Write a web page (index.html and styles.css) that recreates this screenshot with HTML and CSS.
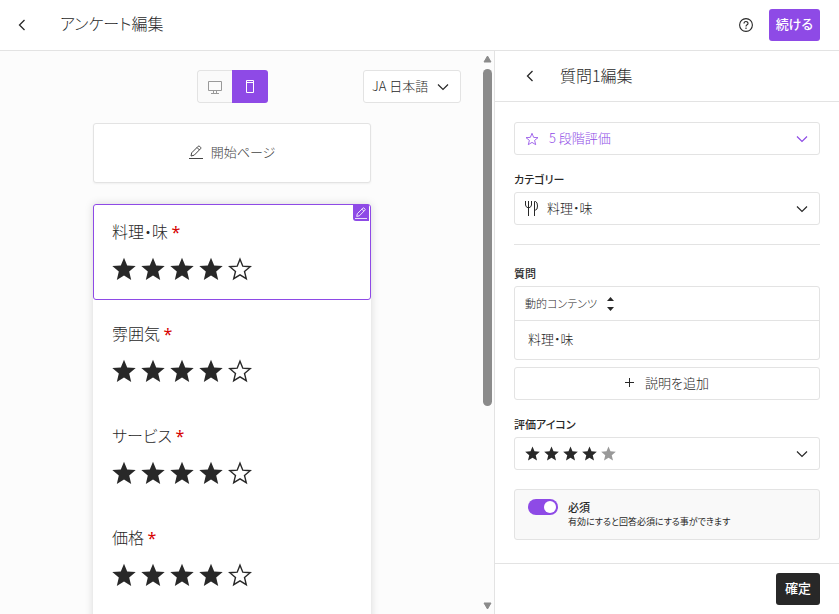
FILE: index.html
```html
<!DOCTYPE html>
<html lang="ja">
<head>
  <meta charset="UTF-8" />
  <meta name="viewport" content="width=device-width, initial-scale=1.0" />
  <title>アンケート編集</title>
  <link rel="stylesheet" href="styles.css">
</head>
<body>

<svg class="sprite" width="0" height="0" aria-hidden="true">
  <symbol id="star" viewBox="0 0 24 24"><path d="M12 .8l3.200 7.700 8.500.6-6.500 5.500 2 8.400-7.200-4.400L4.800 23l2-8.400L.3 9.100l8.500-.6z" fill="currentColor"/></symbol>
  <symbol id="star-line" viewBox="0 0 24 24"><path d="M12 2.200l2.800 7 7.400.5-5.700 4.700 1.800 7.300-6.300-3.900-6.300 3.900 1.800-7.300L1.800 9.700l7.400-.5z" fill="none" stroke="currentColor" stroke-width="1.400"/></symbol>
  <symbol id="chevron-down" viewBox="0 0 12 12"><path d="M1 3.500l5 5 5-5" fill="none" stroke="currentColor" stroke-width="1.200"/></symbol>
  <symbol id="chevron-left" viewBox="0 0 12 12"><path d="M8.500 1l-5 5 5 5" fill="none" stroke="currentColor" stroke-width="1.300"/></symbol>
  <symbol id="pencil" viewBox="0 0 14 14"><path d="M2 11l.7-3.200L9.200 1.300q.7-.6 1.400 0l1 1q.7.7 0 1.400L5.200 10.200zM8 2.500l2.500 2.500M0 13.500h14" fill="none" stroke="currentColor"/></symbol>
</svg>

<header class="topbar">
  <button class="back" aria-label="戻る"><svg class="icon-sm"><use href="#chevron-left"/></svg></button>
  <h1>アンケート編集</h1>
  <button class="help" aria-label="ヘルプ">
    <svg width="14" height="14" viewBox="0 0 14 14" fill="none" stroke="currentColor" stroke-width="1.100"><circle cx="7" cy="7" r="6.400"/><path d="M5 5.500C5 2.900 9 2.900 9 5.400 9 6.900 7 6.700 7 8.500M7 9.600v1.300"/></svg>
  </button>
  <button class="btn btn-primary">続ける</button>
</header>

<div class="layout">
  <main class="preview">
    <div class="canvas">
      <div class="toolbar">
        <div class="device">
          <button aria-label="デスクトップ">
            <svg width="14" height="14" viewBox="0 0 14 14" fill="none" stroke="currentColor"><path d="M.5 1.500h13v9H.5zM5.500 10.500v3M8.500 10.500v3M3 13.500h8"/></svg>
          </button>
          <button class="active" aria-label="モバイル" aria-pressed="true">
            <svg width="8" height="14" viewBox="0 0 8 14" fill="none" stroke="currentColor"><path d="M.5.5h7v12h-7zM.5 2.500h7"/></svg>
          </button>
        </div>
        <div class="select lang">
          <select aria-label="言語"><option>JA 日本語</option></select>
          <svg class="icon-sm"><use href="#chevron-down"/></svg>
        </div>
      </div>

      <button class="start-page"><svg class="icon"><use href="#pencil"/></svg>開始ページ</button>

      <div class="phone">
        <section class="question selected">
          <h2>料理・味 <span class="req">*</span></h2>
          <div class="stars">
            <label><input type="radio" name="q1" aria-label="1"><svg><use href="#star"/></svg></label>
            <label><input type="radio" name="q1" aria-label="2"><svg><use href="#star"/></svg></label>
            <label><input type="radio" name="q1" aria-label="3"><svg><use href="#star"/></svg></label>
            <label><input type="radio" name="q1" aria-label="4" checked><svg><use href="#star"/></svg></label>
            <label><input type="radio" name="q1" aria-label="5"><svg><use href="#star-line"/></svg></label>
          </div>
          <button class="edit-badge" aria-label="編集"><svg><use href="#pencil"/></svg></button>
        </section>
        <section class="question">
          <h2>雰囲気 <span class="req">*</span></h2>
          <div class="stars">
            <label><input type="radio" name="q2" aria-label="1"><svg><use href="#star"/></svg></label>
            <label><input type="radio" name="q2" aria-label="2"><svg><use href="#star"/></svg></label>
            <label><input type="radio" name="q2" aria-label="3"><svg><use href="#star"/></svg></label>
            <label><input type="radio" name="q2" aria-label="4" checked><svg><use href="#star"/></svg></label>
            <label><input type="radio" name="q2" aria-label="5"><svg><use href="#star-line"/></svg></label>
          </div>
        </section>
        <section class="question">
          <h2>サービス <span class="req">*</span></h2>
          <div class="stars">
            <label><input type="radio" name="q3" aria-label="1"><svg><use href="#star"/></svg></label>
            <label><input type="radio" name="q3" aria-label="2"><svg><use href="#star"/></svg></label>
            <label><input type="radio" name="q3" aria-label="3"><svg><use href="#star"/></svg></label>
            <label><input type="radio" name="q3" aria-label="4" checked><svg><use href="#star"/></svg></label>
            <label><input type="radio" name="q3" aria-label="5"><svg><use href="#star-line"/></svg></label>
          </div>
        </section>
        <section class="question">
          <h2>価格 <span class="req">*</span></h2>
          <div class="stars">
            <label><input type="radio" name="q4" aria-label="1"><svg><use href="#star"/></svg></label>
            <label><input type="radio" name="q4" aria-label="2"><svg><use href="#star"/></svg></label>
            <label><input type="radio" name="q4" aria-label="3"><svg><use href="#star"/></svg></label>
            <label><input type="radio" name="q4" aria-label="4" checked><svg><use href="#star"/></svg></label>
            <label><input type="radio" name="q4" aria-label="5"><svg><use href="#star-line"/></svg></label>
          </div>
        </section>
      </div>
    </div>

    <div class="scrollbar" aria-hidden="true">
      <svg width="9" height="8" viewBox="0 0 9 8"><path d="M4.500 1L8 7H1z" fill="currentColor" stroke="currentColor" stroke-linejoin="round"/></svg>
      <div class="track"><div class="thumb"></div></div>
      <svg width="9" height="8" viewBox="0 0 9 8"><path d="M4.500 7L8 1H1z" fill="currentColor" stroke="currentColor" stroke-linejoin="round"/></svg>
    </div>
  </main>

  <aside class="sidebar">
    <div class="side-head">
      <button class="back" aria-label="戻る"><svg class="icon-sm"><use href="#chevron-left"/></svg></button>
      <h2>質問1編集</h2>
    </div>

    <div class="side-body">
      <div class="select type">
        <svg class="icon"><use href="#star-line"/></svg>
        <select aria-label="質問タイプ"><option>5 段階評価</option></select>
        <svg class="icon-sm"><use href="#chevron-down"/></svg>
      </div>

      <div class="field">
        <label for="category">カテゴリー</label>
        <div class="select">
          <svg class="icon-cat" viewBox="0 0 13 15" fill="none" stroke="currentColor"><path d="M.5 0v4q0 2 3 3 3-1 3-3V0M3.500 0v15M9.500 15V.5h1q2 .5 2 4.500t-2 4h-1"/></svg>
          <select id="category"><option>料理・味</option></select>
          <svg class="icon-sm"><use href="#chevron-down"/></svg>
        </div>
      </div>

      <hr>

      <div class="field">
        <label for="question">質問</label>
        <div class="editor">
          <div class="editor-bar">
            <select aria-label="動的コンテンツ"><option>動的コンテンツ</option></select>
            <svg width="7" height="14" viewBox="0 0 7 14" fill="currentColor"><path d="M0 4l3.500-4L7 4zM0 10l3.500 4L7 10z"/></svg>
          </div>
          <input type="text" id="question" value="料理・味">
        </div>
        <button class="add"><svg width="9" height="9" viewBox="0 0 9 9"><path d="M4.500 0v9M0 4.500h9" stroke="currentColor"/></svg>説明を追加</button>
      </div>

      <div class="field">
        <label for="rateIcon">評価アイコン</label>
        <div class="select">
          <span class="mini-stars">
            <svg><use href="#star"/></svg><svg><use href="#star"/></svg><svg><use href="#star"/></svg><svg><use href="#star"/></svg><svg class="off"><use href="#star"/></svg>
          </span>
          <select id="rateIcon"><option value="star"></option></select>
          <svg class="icon-sm"><use href="#chevron-down"/></svg>
        </div>
      </div>

      <div class="required-box">
        <input type="checkbox" id="required" class="switch" checked>
        <label for="required"><strong>必須</strong><small>有効にすると回答必須にする事ができます</small></label>
      </div>
    </div>

    <div class="side-foot">
      <button class="btn btn-dark">確定</button>
    </div>
  </aside>
</div>

</body>
</html>
```

FILE: styles.css
```css
:root {
  --purple: #8e4ae6;
  --dark: #282828;
  --line: #e3e3e3;
  --gray: #8b8b8b;
}
* { box-sizing: border-box; }
body {
  margin: 0;
  height: 100vh;
  display: flex;
  flex-direction: column;
  font-family: "Noto Sans CJK JP", sans-serif;
  font-feature-settings: "palt";
  font-size: 13px;
  font-weight: 300;
  line-height: 20px;
  color: var(--dark);
  background: #fff;
}
button, select, input {
  font: inherit;
  font-feature-settings: inherit;
  color: inherit;
  margin: 0;
  padding: 0;
  border: none;
  background: none;
}
button { cursor: pointer; }
svg { display: block; flex: none; }
.sprite { position: absolute; }
h1, h2 {
  margin: 0;
  font-size: 16px;
  font-weight: 300;
  line-height: 24px;
}
.icon { width: 14px; height: 14px; }
.icon-sm { width: 12px; height: 12px; }

.topbar {
  flex: none;
  height: 51px;
  display: flex;
  align-items: center;
  padding: 0 19px 0 16px;
  border-bottom: 1px solid var(--line);
}
.topbar h1 { flex: 1; padding-bottom: 4px; }
.back { width: 12px; margin-right: 32px; }
.help { margin-right: 16px; }
.btn {
  height: 32px;
  padding: 0 9px 2px;
  border-radius: 3px;
  color: #fff;
  font-weight: 500;
}
.btn-primary { padding: 0 7px 2px; background: var(--purple); }
.btn-dark { background: var(--dark); }

.layout {
  flex: 1;
  min-height: 0;
  display: flex;
}
.preview {
  flex: 1;
  min-width: 0;
  display: flex;
  background: #fcfcfc;
}
.canvas {
  flex: 1;
  overflow: hidden;
  padding: 19px 21px 0 3px;
  display: flex;
  flex-direction: column;
  align-items: center;
}
.toolbar {
  width: 100%;
  display: grid;
  grid-template-columns: 1fr auto 1fr;
  margin-bottom: 20px;
}
.device {
  grid-column: 2;
  display: flex;
  height: 33px;
  border-radius: 3px;
  overflow: hidden;
  background: #fafafa;
}
.device button {
  width: 35px;
  display: flex;
  align-items: center;
  justify-content: center;
  color: #999;
  border: 1px solid var(--line);
  border-right: none;
  border-radius: 3px 0 0 3px;
}
.device button.active {
  width: 36px;
  color: #fff;
  background: var(--purple);
  border: none;
  border-radius: 0;
}
.lang { width: 98px; justify-self: end; }
.lang.select { padding: 0 11px 0 8px; }

.select {
  height: 33px;
  display: flex;
  align-items: center;
  padding: 0 11px 0 10px;
  border: 1px solid var(--line);
  border-radius: 3px;
  background: #fff;
}
.select select {
  appearance: none;
  flex: 1;
  min-width: 0;
  height: 100%;
  padding-bottom: 2px;
}
.select .icon { margin-right: 10px; }

.start-page {
  flex: none;
  width: 278px;
  height: 60px;
  margin-bottom: 21px;
  padding-bottom: 2px;
  display: flex;
  align-items: center;
  justify-content: center;
  gap: 8px;
  color: #444;
  background: #fff;
  border: 1px solid var(--line);
  border-radius: 3px;
  box-shadow: 0 1px 2px rgba(0,0,0,0.05);
}
.phone {
  flex: none;
  width: 278px;
  min-height: 100%;
  display: flex;
  flex-direction: column;
  gap: 6px;
  background: #fff;
  border-radius: 3px;
  box-shadow: 0 0 8px rgba(0,0,0,0.15);
}
.question {
  position: relative;
  height: 96px;
  padding: 14px 18px;
  border: 1px solid transparent;
  border-radius: 3px;
}
.question.selected { border-color: var(--purple); }
.question h2 { margin-bottom: 13px; }
.req {
  font-family: "Noto Sans", sans-serif;
  font-weight: 400;
  color: #d60000;
}
.stars { display: flex; gap: 5px; }
.stars label { display: flex; }
.stars input { appearance: none; width: 0; height: 0; }
.stars svg { width: 24px; height: 24px; }
.edit-badge {
  position: absolute;
  top: 0;
  right: 1px;
  width: 16px;
  height: 16px;
  display: flex;
  align-items: center;
  justify-content: center;
  color: #fff;
  background: var(--purple);
  border-radius: 0 0 0 3px;
}
.edit-badge svg { width: 12px; height: 12px; }

.scrollbar {
  flex: none;
  width: 11px;
  margin-right: 1px;
  padding: 4px 0;
  display: flex;
  flex-direction: column;
  align-items: center;
  color: var(--gray);
}
.track { flex: 1; padding: 6px 0; }
.thumb {
  width: 9px;
  height: 64%;
  border-radius: 5px;
  background: var(--gray);
}

.sidebar {
  flex: none;
  width: 345px;
  display: flex;
  flex-direction: column;
  border-left: 1px solid var(--line);
}
.side-head {
  flex: none;
  height: 51px;
  display: flex;
  align-items: center;
  padding: 0 29px;
  border-bottom: 1px solid var(--line);
}
.side-head .back { margin-right: 24px; }
.side-head h2 { padding-bottom: 2px; }
.side-body {
  flex: 1;
  min-height: 0;
  overflow: hidden;
  padding: 20px 19px;
}
.type { color: var(--purple); }
.field { margin-top: 16px; }
.field > label {
  display: block;
  margin-bottom: 4px;
  font-size: 11px;
  font-weight: 500;
  line-height: 17px;
}
.icon-cat { width: 13px; height: 15px; margin-right: 9px; }
hr {
  margin: 19px 0 0;
  border: none;
  border-top: 1px solid var(--line);
}
hr + .field { margin-top: 20px; }
.editor {
  border: 1px solid var(--line);
  border-radius: 3px;
}
.editor-bar {
  height: 34px;
  display: flex;
  align-items: center;
  gap: 9px;
  padding: 0 10px;
  border-bottom: 1px solid var(--line);
}
.editor-bar select {
  appearance: none;
  padding-bottom: 2px;
  font-size: 11px;
}
.editor input {
  display: block;
  width: 100%;
  height: 38px;
  padding: 0 13px 4px;
}
.add {
  width: 100%;
  height: 33px;
  margin-top: 7px;
  padding-bottom: 2px;
  display: flex;
  align-items: center;
  justify-content: center;
  gap: 11px;
  border: 1px solid var(--line);
  border-radius: 3px;
}
.mini-stars { display: flex; gap: 4px; }
.mini-stars svg { width: 15px; height: 15px; }
.mini-stars .off { color: #999; }
.required-box {
  display: flex;
  gap: 10px;
  margin-top: 19px;
  padding: 9px 13px 10px;
  border: 1px solid var(--line);
  border-radius: 3px;
  background: #f9f9f9;
}
.required-box strong {
  display: block;
  font-size: 11px;
  font-weight: 500;
  line-height: 16px;
}
.required-box small {
  display: block;
  font-size: 9px;
  font-weight: 400;
  line-height: 14px;
}
.switch {
  appearance: none;
  width: 30px;
  height: 16px;
  border-radius: 8px;
  background: #bbb;
  cursor: pointer;
}
.switch::before {
  content: "";
  display: block;
  width: 12px;
  height: 12px;
  margin: 2px;
  border-radius: 50%;
  background: #fff;
}
.switch:checked { background: var(--purple); }
.switch:checked::before { margin-left: 16px; }

.side-foot {
  flex: none;
  height: 51px;
  display: flex;
  align-items: center;
  justify-content: flex-end;
  padding: 0 19px;
  border-top: 1px solid var(--line);
}
```
